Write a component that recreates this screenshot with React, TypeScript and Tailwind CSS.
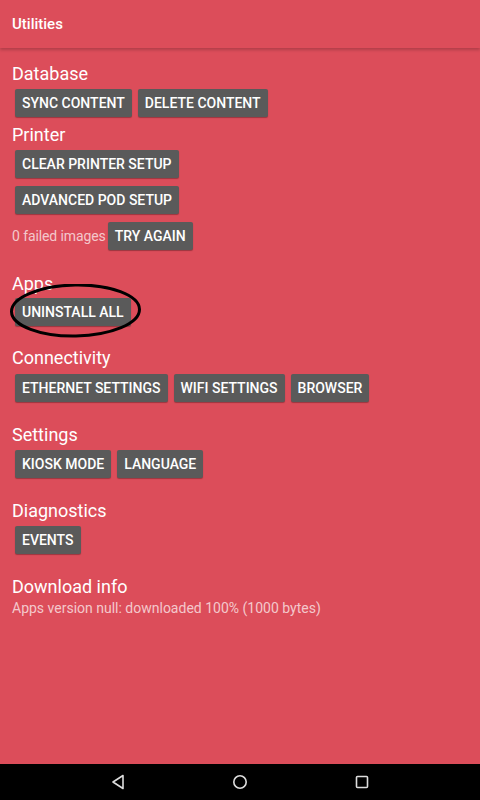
import React from 'react';

function Btn({ children }: { children: React.ReactNode }) {
  return (
    <div className="h-[28px] px-[7px] flex items-center bg-[#5a5a5a] text-white text-[14px] font-medium rounded-[2px] shadow-[0_1px_1px_rgba(0,0,0,0.3)] whitespace-nowrap">
      {children}
    </div>
  );
}

function Label({ children, className = '' }: { children: React.ReactNode; className?: string }) {
  return <div className={`h-[22px] leading-[22px] text-[18px] text-white ${className}`}>{children}</div>;
}

function Row({ children, className = '' }: { children: React.ReactNode; className?: string }) {
  return <div className={`flex items-center gap-[6px] pl-[3px] ${className}`}>{children}</div>;
}

export default function App() {
  return (
    <div className="w-[480px] h-[800px] flex flex-col bg-[#dc4d5a] font-['Roboto',sans-serif] overflow-hidden">
      <div className="h-12 shrink-0 flex items-center px-3 text-white text-[15px] font-medium shadow-[0_2px_3px_rgba(0,0,0,0.2)] relative z-10">
        Utilities
      </div>

      <div className="flex-1 flex flex-col px-3 pt-[15px] relative">
        <Label>Database</Label>
        <Row className="mt-[4px]">
          <Btn>SYNC CONTENT</Btn>
          <Btn>DELETE CONTENT</Btn>
        </Row>

        <Label className="mt-[7px]">Printer</Label>
        <Row className="mt-[4px]">
          <Btn>CLEAR PRINTER SETUP</Btn>
        </Row>
        <Row className="mt-[8px]">
          <Btn>ADVANCED POD SETUP</Btn>
        </Row>
        <div className="flex items-center gap-[2px] mt-[8px]">
          <span className="text-[14px] text-white/70 tracking-[-0.1px]">0 failed images</span>
          <Btn>TRY AGAIN</Btn>
        </div>

        <Label className="mt-[23px]">Apps</Label>
        <div className="relative">
          <Row className="mt-[3px]">
            <Btn>UNINSTALL ALL</Btn>
          </Row>
          <svg className="absolute left-[-2px] top-[-11px]" width="134" height="56" viewBox="0 0 134 56">
            <ellipse cx="65.5" cy="26.5" rx="64" ry="25.5" fill="none" stroke="#000" strokeWidth="3" transform="rotate(-1 65.5 26.5)" />
          </svg>
        </div>

        <Label className="mt-[21px]">Connectivity</Label>
        <Row className="mt-[5px]">
          <Btn>ETHERNET SETTINGS</Btn>
          <Btn>WIFI SETTINGS</Btn>
          <Btn>BROWSER</Btn>
        </Row>

        <Label className="mt-[22px]">Settings</Label>
        <Row className="mt-[4px]">
          <Btn>KIOSK MODE</Btn>
          <Btn>LANGUAGE</Btn>
        </Row>

        <Label className="mt-[22px]">Diagnostics</Label>
        <Row className="mt-[4px]">
          <Btn>EVENTS</Btn>
        </Row>

        <Label className="mt-[22px]">Download info</Label>
        <div className="text-[14px] text-white/70 leading-[18px] mt-[1px]">
          Apps version null: downloaded 100% (1000 bytes)
        </div>
      </div>

      <div className="h-9 shrink-0 bg-black flex items-center justify-between px-[111px]">
        <svg width="14" height="16" viewBox="0 0 14 16">
          <path d="M12 1.5 L2 8 L12 14.5 Z" fill="none" stroke="#ddd" strokeWidth="1.6" strokeLinejoin="round" />
        </svg>
        <svg width="16" height="16" viewBox="0 0 16 16">
          <circle cx="8" cy="8" r="6.2" fill="none" stroke="#ddd" strokeWidth="1.6" />
        </svg>
        <svg width="14" height="14" viewBox="0 0 14 14">
          <rect x="1.5" y="1.5" width="11" height="11" rx="1" fill="none" stroke="#ddd" strokeWidth="1.6" />
        </svg>
      </div>
    </div>
  );
}
